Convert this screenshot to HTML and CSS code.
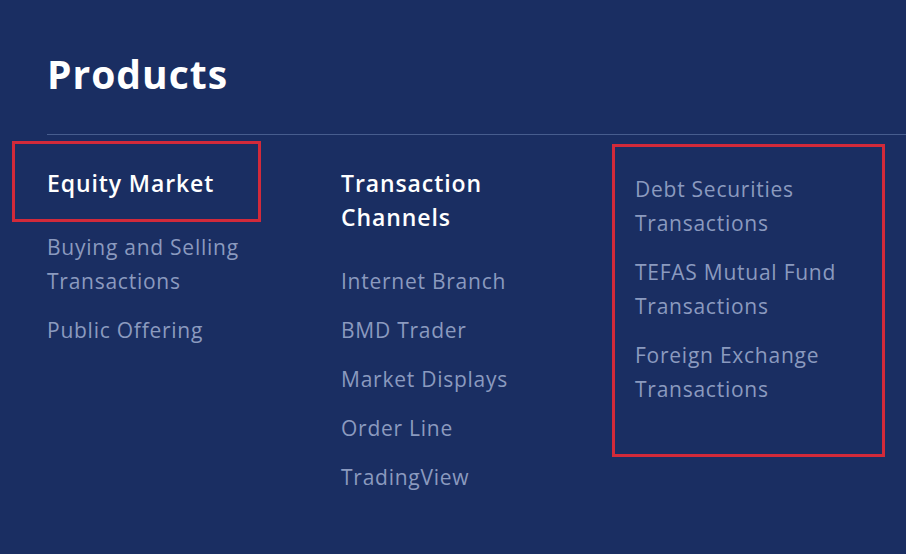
FILE: index.html
```html
<!DOCTYPE html>
<html lang="en">
<head>
<meta charset="utf-8">
<title>Products</title>
<link rel="stylesheet" href="styles.css">
</head>
<body>
<section class="products">
  <h1 class="title">Products</h1>
  <div class="divider"></div>
  <div class="columns">
    <div class="col">
      <h2 class="col-head">Equity Market</h2>
      <ul class="links">
        <li>Buying and Selling Transactions</li>
        <li>Public Offering</li>
      </ul>
    </div>
    <div class="col">
      <h2 class="col-head">Transaction Channels</h2>
      <ul class="links">
        <li>Internet Branch</li>
        <li>BMD Trader</li>
        <li>Market Displays</li>
        <li>Order Line</li>
        <li>TradingView</li>
      </ul>
    </div>
    <div class="col">
      <ul class="links links-plain">
        <li>Debt Securities Transactions</li>
        <li>TEFAS Mutual Fund Transactions</li>
        <li>Foreign Exchange Transactions</li>
      </ul>
    </div>
  </div>
  <div class="mark mark-one"></div>
  <div class="mark mark-two"></div>
</section>
</body>
</html>
```
FILE: styles.css
```css
html, body {
  margin: 0;
  padding: 0;
  background: #1a2e62;
  overflow: hidden;
}
body {
  width: 906px;
  height: 554px;
  font-family: "Open Sans", "Liberation Sans", sans-serif;
}
.products {
  position: relative;
  padding: 46px 0 0 47px;
  height: 554px;
  box-sizing: border-box;
}
.title {
  margin: 0;
  font-size: 39px;
  line-height: 56px;
  font-weight: 700;
  letter-spacing: 1px;
  color: #ffffff;
}
.divider {
  margin-top: 32px;
  height: 1px;
  background: #475d8e;
}
.columns {
  display: grid;
  grid-template-columns: 294px 294px 294px;
  padding-top: 31px;
}
.col-head {
  margin: 0;
  font-size: 23px;
  line-height: 34px;
  font-weight: 600;
  letter-spacing: 0.9px;
  color: #ffffff;
  width: 200px;
}
.links {
  list-style: none;
  margin: 30px 0 0 0;
  padding: 0;
  width: 215px;
}
.links-plain {
  margin-top: 6px;
}
.links li {
  font-size: 21px;
  line-height: 34px;
  letter-spacing: 0.75px;
  color: #8b9abf;
  margin-bottom: 15px;
}
.mark {
  position: absolute;
  border: 3px solid #d22a3a;
  box-sizing: border-box;
}
.mark-one {
  left: 12px;
  top: 141px;
  width: 249px;
  height: 81px;
}
.mark-two {
  left: 612px;
  top: 144px;
  width: 273px;
  height: 313px;
}
```
